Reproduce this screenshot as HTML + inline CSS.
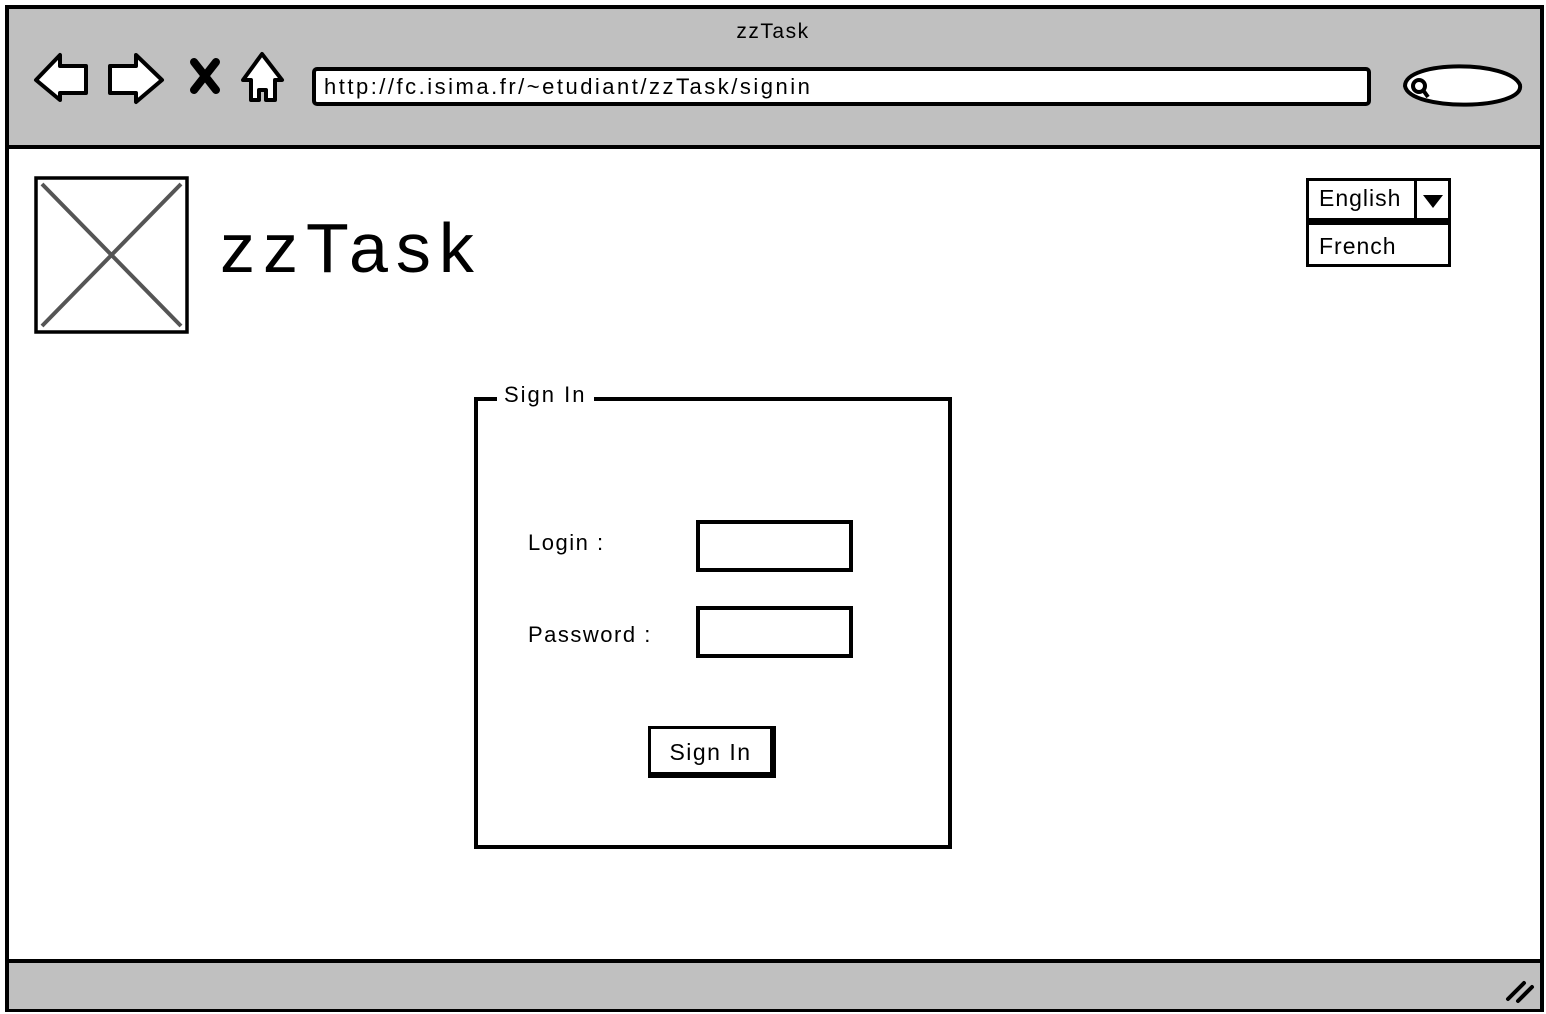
<!DOCTYPE html>
<html><head><meta charset="utf-8"><style>
body{margin:0;width:1546px;height:1014px;background:#fff;font-family:"Comic Sans MS","Liberation Sans",sans-serif;position:relative;overflow:hidden}
.a{position:absolute;box-sizing:border-box}
</style></head><body>
<div class="a" style="left:5px;top:5px;width:1539px;height:1007px;border:4px solid #000;background:#fff"></div>
<div class="a" style="left:9px;top:9px;width:1531px;height:140px;background:#c0c0c0;border-bottom:4px solid #000"></div>
<div class="a" style="left:9px;top:959px;width:1531px;height:50px;background:#c0c0c0;border-top:4px solid #000"></div>
<div class="a" style="left:0;top:20px;width:1546px;text-align:center;font-size:21px;letter-spacing:1.5px">zzTask</div>
<svg class="a" style="left:0;top:0" width="1546" height="160">
<g fill="#fff" stroke="#000" stroke-width="4" stroke-linejoin="round">
<path d="M36 80 L60 55 L60 66 L86 66 L86 93 L60 93 L60 100 Z"/>
<path d="M110 66 L136 66 L136 55 L162 80 L136 102 L136 93 L110 93 Z"/>
<path d="M243 80 L262 54 L282 80 L275 80 L275 100 L266 100 L266 90 L259 90 L259 100 L251 100 L251 80 Z"/>
<path d="M1405 86 C1405 60 1510 60 1520 85 C1525 110 1410 112 1405 86 Z"/>
</g>
<path d="M194 62 L216 90 M216 62 L194 90" stroke="#000" stroke-width="8" stroke-linecap="round"/>
<circle cx="1419" cy="86" r="6" fill="none" stroke="#000" stroke-width="4"/>
<path d="M1423 90 L1428 97" stroke="#000" stroke-width="4"/>
</svg>
<div class="a" style="left:312px;top:67px;width:1059px;height:39px;background:#fff;border:4px solid #000;border-radius:5px;font-size:22px;padding:3px 0 0 8px;letter-spacing:2.5px;white-space:nowrap">http://fc.isima.fr/~etudiant/zzTask/signin</div>
<svg class="a" style="left:34px;top:176px" width="155" height="158"><rect x="2" y="2" width="151" height="154" fill="#fff" stroke="#000" stroke-width="3.5"/><path d="M8 8 L147 150 M147 8 L8 150" stroke="#555" stroke-width="4"/></svg>
<div class="a" style="left:220px;top:203px;font-size:70px;line-height:90px;letter-spacing:8px">zzTask</div>
<div class="a" style="left:1306px;top:178px;width:145px;height:43px;border:3px solid #000;font-size:23px;padding:4px 0 0 10px;letter-spacing:1px">English</div>
<div class="a" style="left:1414px;top:178px;width:37px;height:43px;border:3px solid #000"></div>
<svg class="a" style="left:1422px;top:193px" width="22" height="16"><path d="M1 2 L21 2 L11 15 Z" fill="#000"/></svg>
<div class="a" style="left:1306px;top:221px;width:145px;height:46px;border:3px solid #000;border-top-width:4px;font-size:23px;padding:8px 0 0 10px;letter-spacing:1px">French</div>
<div class="a" style="left:474px;top:397px;width:478px;height:452px;border:4px solid #000"></div>
<div class="a" style="left:497px;top:382px;background:#fff;padding:0 7px;font-size:22px;letter-spacing:2px">Sign In</div>
<div class="a" style="left:528px;top:530px;font-size:22px;letter-spacing:1.5px">Login :</div>
<div class="a" style="left:528px;top:622px;font-size:22px;letter-spacing:1.5px">Password :</div>
<div class="a" style="left:696px;top:520px;width:157px;height:52px;border:4px solid #000"></div>
<div class="a" style="left:696px;top:606px;width:157px;height:52px;border:4px solid #000"></div>
<div class="a" style="left:648px;top:726px;width:128px;height:52px;border:3px solid #000;border-right-width:6px;border-bottom-width:6px;font-size:23px;text-align:center;padding-top:10px;letter-spacing:1.5px">Sign In</div>
<svg class="a" style="left:1500px;top:975px" width="40" height="30"><path d="M8 24 L24 8 M18 26 L32 12" stroke="#000" stroke-width="4" stroke-linecap="round"/></svg>
</body></html>
